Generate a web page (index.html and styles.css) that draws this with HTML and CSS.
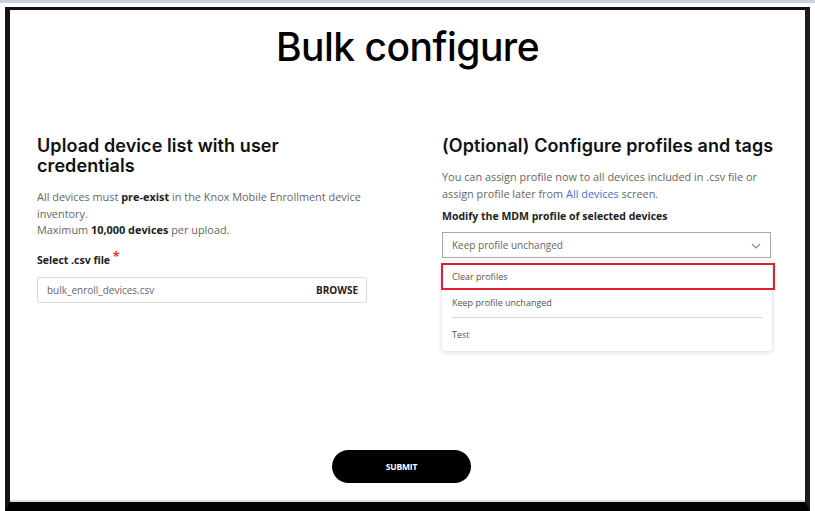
FILE: index.html
```html
<!DOCTYPE html>
<html>
<head>
<meta charset="utf-8">
<link rel="stylesheet" href="styles.css">
</head>
<body>
<div class="topstrip"></div>
<div class="frame">
  <h1 class="title">Bulk configure</h1>
  <div class="columns">
    <section class="col">
      <h2 class="heading">Upload device list with user credentials</h2>
      <p class="text">All devices must <b>pre-exist</b> in the Knox Mobile Enrollment device inventory.<br>Maximum <b>10,000 devices</b> per upload.</p>
      <div class="label">Select .csv file <span class="req">*</span></div>
      <div class="filebox">
        <span class="filename">bulk_enroll_devices.csv</span>
        <span class="browse">BROWSE</span>
      </div>
    </section>
    <section class="col">
      <h2 class="heading">(Optional) Configure profiles and tags</h2>
      <p class="text text-right">You can assign profile now to all devices included in .csv file or assign profile later from <span class="link">All devices</span> screen.</p>
      <div class="label label-right">Modify the MDM profile of selected devices</div>
      <div class="selectwrap">
        <div class="select">
          <span>Keep profile unchanged</span>
          <svg class="chev" width="10" height="6" viewBox="0 0 10 6"><path d="M1 1 L5 5 L9 1" fill="none" stroke="#888" stroke-width="1.1"/></svg>
        </div>
        <div class="menu">
          <div class="item item-active">Clear profiles</div>
          <div class="item">Keep profile unchanged</div>
          <div class="sep"></div>
          <div class="item">Test</div>
        </div>
      </div>
    </section>
  </div>
  <div class="actions">
    <button class="submit">SUBMIT</button>
  </div>
</div>
</body>
</html>
```
FILE: styles.css
```css
* { box-sizing: border-box; }
html, body { margin: 0; padding: 0; background: #fff; }
body { width: 815px; height: 511px; overflow: hidden; font-family: "Open Sans", "Noto Sans", sans-serif; }
.topstrip { height: 3px; background: #c9d1dd; }
.frame {
  margin: 4px 5px 0 5px;
  height: 504px;
  border-left: 5px solid #151515;
  border-right: 5px solid #1c1c1c;
  border-top: 3px solid #111;
  border-bottom: 9px solid #000;
  display: flex;
  flex-direction: column;
  box-shadow: inset 0 -2px 0 #ddd;
}
.title {
  margin: 13px 0 0 0;
  text-align: center;
  font-family: "Inter", sans-serif;
  font-weight: 500;
  font-size: 39px;
  line-height: 48px;
  letter-spacing: -0.5px;
  color: #000;
}
.columns {
  display: grid;
  grid-template-columns: 330px 330px;
  column-gap: 75px;
  padding-left: 27px;
  margin-top: 65px;
}
.col { position: relative; }
.heading {
  margin: 0;
  font-family: "Inter", sans-serif;
  font-weight: 600;
  font-size: 18px;
  letter-spacing: 0.08px;
  line-height: 20px;
  color: #111;
  width: 300px;
}
.col:nth-child(2) .heading { width: 345px; }
.text {
  margin: 13px 0 0 0;
  font-size: 10.9px;
  line-height: 16.5px;
  color: #666;
}
.text b { color: #222; font-weight: 700; }
.text-right { margin-top: 12px; line-height: 17px; }
.link { color: #4a72c4; }
.label {
  margin-top: 12px;
  font-size: 10.5px;
  line-height: 16px;
  font-weight: 700;
  color: #222;
}
.label-right { margin-top: 6px; }
.req { color: #e53935; font-size: 13px; position: relative; top: -3px; }
.filebox {
  margin-top: 9px;
  height: 26px;
  border: 1px solid #d8d8d8;
  border-radius: 2px;
  display: flex;
  align-items: center;
  justify-content: space-between;
  padding: 0 8px 0 9px;
  font-size: 10px;
}
.filename { color: #666; }
.browse { font-weight: 700; color: #222; font-size: 10px; }
.selectwrap { position: relative; margin-top: 8px; width: 329px; }
.select {
  height: 26px;
  border: 1px solid #a8a8a8;
  display: flex;
  align-items: center;
  justify-content: space-between;
  padding: 0 9px 0 9px;
  font-size: 10px;
  color: #666;
}
.chev { margin-top: 2px; }
.menu {
  position: absolute;
  left: 0;
  top: 29px;
  width: 330px;
  background: #fff;
  box-shadow: 0 1px 5px rgba(0,0,0,0.18);
  border-radius: 3px;
  padding: 2px 0 5px 0;
  font-size: 9px;
  color: #555;
}
.item {
  height: 24px;
  display: flex;
  align-items: center;
  padding-left: 10px;
}
.item-active {
  border: 2px solid #e0202e;
  margin: 0 -3px 0 -1px;
  padding-left: 9px;
  height: 27px;
}
.sep { height: 1px; background: #d6d6d6; margin: 3px 10px 4px 10px; }
.actions {
  margin-top: auto;
  margin-bottom: 19px;
  display: flex;
  justify-content: center;
}
.submit {
  width: 139px;
  height: 33px;
  border: none;
  border-radius: 17px;
  background: #000;
  color: #fff;
  font-family: "Open Sans", sans-serif;
  font-weight: 700;
  font-size: 8.5px;
  letter-spacing: -0.2px;
  margin-right: 12px;
}
```
